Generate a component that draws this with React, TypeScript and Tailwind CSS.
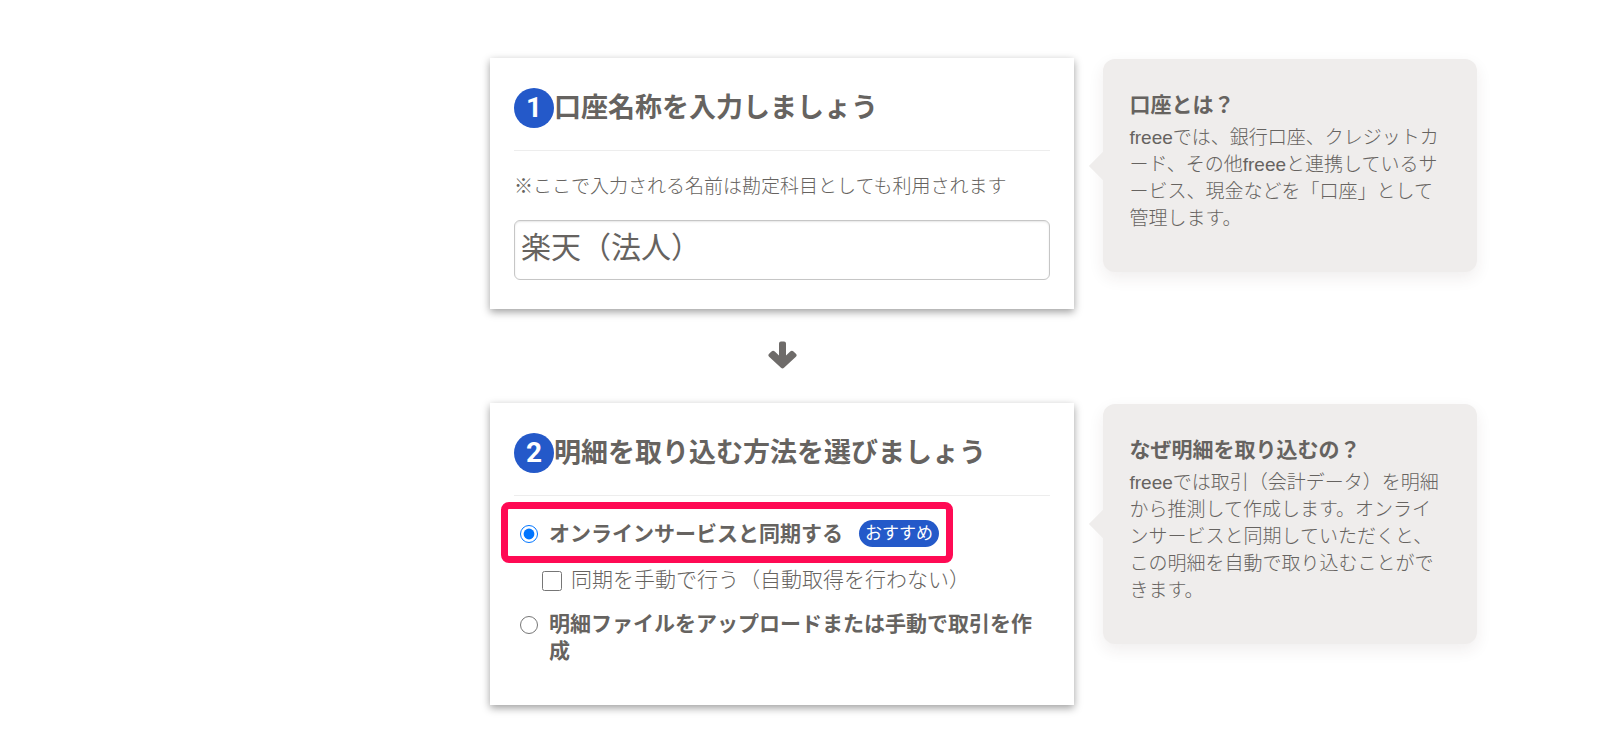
import { useState } from 'react';
import type { ReactNode } from 'react';

type SyncMethod = 'online' | 'upload';

function StepHeading({ step, children }: { step: number; children: ReactNode }) {
  return (
    <h2 className="flex items-center border-b border-[#ededed] pb-[22px] text-[27px] leading-10 font-bold">
      <span className="flex size-10 shrink-0 items-center justify-center rounded-full bg-[#2459c9] font-['Roboto',sans-serif] text-[28px] text-white">
        {step}
      </span>
      {children}
    </h2>
  );
}

function StepCard({ children }: { children: ReactNode }) {
  return (
    <section className="min-w-0 bg-white px-6 pt-[30px] pb-[29px] shadow-[0_3px_8px_rgba(0,0,0,0.38)]">
      {children}
    </section>
  );
}

/** Grey speech bubble pointing at the card on its left. */
function HelpBubble({ title, children }: { title: string; children: ReactNode }) {
  return (
    <aside className="relative mt-px min-w-0 self-start rounded-xl bg-[#efedec] pt-8 pr-[30px] pb-10 pl-[26px] shadow-[0_6px_16px_rgba(60,40,40,0.08)]">
      <span className="absolute top-1/2 -left-2.5 size-5 -translate-y-1/2 rotate-45 bg-[#efedec]" />
      <h3 className="mb-1.5 text-[21px] leading-[27px] font-bold">{title}</h3>
      <p className="text-[19px] leading-[27px] font-light">{children}</p>
    </aside>
  );
}

function ArrowDown() {
  return (
    <svg viewBox="0 0 29 28" className="h-7 w-[29px]" fill="#6e6b69" aria-hidden="true">
      <path d="M11 2.5Q11 .5 13 .5h3q2 0 2 2v12l4.2-3.9q1.7-1.5 3.3 0l2.4 2.1q1.5 1.5 0 3L16 26.8q-1.5 1.3-3 0L1.1 15.7q-1.5-1.5 0-3l2.4-2.1q1.6-1.5 3.3 0L11 14.5z" />
    </svg>
  );
}

export default function App() {
  const [name, setName] = useState('楽天（法人）');
  const [method, setMethod] = useState<SyncMethod>('online');
  const [manual, setManual] = useState(false);

  return (
    <main
      lang="ja"
      className="grid grid-cols-[584fr_373fr] gap-x-[29px] bg-white pt-[58px] pr-[7.7%] pb-[26px] pl-[30.625%] font-['Liberation_Sans','Noto_Sans_CJK_JP',sans-serif] text-[#666360]"
    >
      <StepCard>
        <StepHeading step={1}>口座名称を入力しましょう</StepHeading>
        <label htmlFor="account-name" className="mt-[22px] mb-5 block text-[19px] leading-[27px] font-light">
          ※ここで入力される名前は勘定科目としても利用されます
        </label>
        <input
          id="account-name"
          type="text"
          value={name}
          onChange={(e) => setName(e.target.value)}
          className="block h-[60px] w-full rounded-md border border-[#c6c6c6] px-1.5 pb-2.5 text-[30px] shadow-[inset_0_1px_2px_rgba(0,0,0,0.1)]"
        />
      </StepCard>
      <HelpBubble title="口座とは？">
        freeeでは、銀行口座、クレジットカード、その他freeeと連携しているサービス、現金などを「口座」として管理します。
      </HelpBubble>

      <div className="col-span-2 grid grid-cols-subgrid">
        <div className="flex justify-center pt-8 pb-[34px]">
          <ArrowDown />
        </div>
      </div>

      <StepCard>
        <StepHeading step={2}>明細を取り込む方法を選びましょう</StepHeading>
        <div className="relative mt-6 inline-flex items-center pl-1.5">
          <span className="pointer-events-none absolute -top-[18px] -right-[14px] -bottom-4 -left-[13px] rounded-lg border-[7px] border-[#ff0a54]" />
          <input
            id="online"
            type="radio"
            name="method"
            checked={method === 'online'}
            onChange={() => setMethod('online')}
            className="size-[18px] shrink-0"
          />
          <label htmlFor="online" className="ml-[11px] text-[21px] leading-[27px] font-bold">
            オンラインサービスと同期する
          </label>
          <span className="ml-4 rounded-full bg-[#2459c9] px-1.5 text-[17px] leading-[27px] text-white">おすすめ</span>
        </div>
        <div className="mt-4 flex items-start pl-7">
          <input
            id="manual"
            type="checkbox"
            checked={manual}
            onChange={(e) => setManual(e.target.checked)}
            className="mt-[5px] size-5 shrink-0"
          />
          <label htmlFor="manual" className="ml-[9px] text-[21px] leading-[27px] font-light">
            同期を手動で行う（自動取得を行わない）
          </label>
        </div>
        <div className="mt-[17px] mb-3 flex items-start pl-1.5">
          <input
            id="upload"
            type="radio"
            name="method"
            checked={method === 'upload'}
            onChange={() => setMethod('upload')}
            className="mt-1.5 size-[18px] shrink-0"
          />
          <label htmlFor="upload" className="ml-[11px] text-[21px] leading-[27px] font-bold">
            明細ファイルをアップロードまたは手動で取引を作成
          </label>
        </div>
      </StepCard>
      <HelpBubble title="なぜ明細を取り込むの？">
        freeeでは取引（会計データ）を明細から推測して作成します。オンラインサービスと同期していただくと、この明細を自動で取り込むことができます。
      </HelpBubble>
    </main>
  );
}
